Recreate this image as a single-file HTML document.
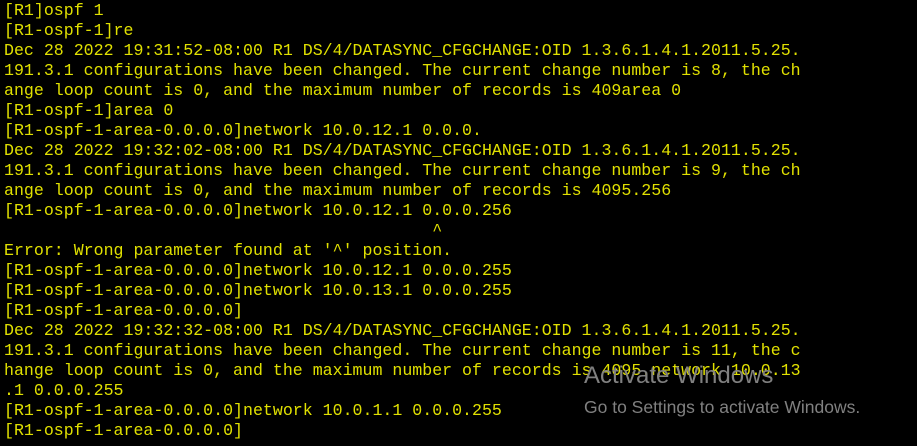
<!DOCTYPE html>
<html><head><meta charset="utf-8"><style>
html,body{margin:0;padding:0;background:#000;width:917px;height:446px;overflow:hidden}
pre{margin:0;position:absolute;left:4px;top:1px;font-family:"Liberation Mono",monospace;font-size:16.6px;line-height:20px;color:#e0e000;white-space:pre}
.w{position:absolute;font-family:"Liberation Sans",sans-serif;color:#808080}
</style></head><body>
<pre>[R1]ospf 1
[R1-ospf-1]re
Dec 28 2022 19:31:52-08:00 R1 DS/4/DATASYNC_CFGCHANGE:OID 1.3.6.1.4.1.2011.5.25.
191.3.1 configurations have been changed. The current change number is 8, the ch
ange loop count is 0, and the maximum number of records is 409area 0
[R1-ospf-1]area 0
[R1-ospf-1-area-0.0.0.0]network 10.0.12.1 0.0.0.
Dec 28 2022 19:32:02-08:00 R1 DS/4/DATASYNC_CFGCHANGE:OID 1.3.6.1.4.1.2011.5.25.
191.3.1 configurations have been changed. The current change number is 9, the ch
ange loop count is 0, and the maximum number of records is 4095.256
[R1-ospf-1-area-0.0.0.0]network 10.0.12.1 0.0.0.256
                                           ^
Error: Wrong parameter found at '^' position.
[R1-ospf-1-area-0.0.0.0]network 10.0.12.1 0.0.0.255
[R1-ospf-1-area-0.0.0.0]network 10.0.13.1 0.0.0.255
[R1-ospf-1-area-0.0.0.0]
Dec 28 2022 19:32:32-08:00 R1 DS/4/DATASYNC_CFGCHANGE:OID 1.3.6.1.4.1.2011.5.25.
191.3.1 configurations have been changed. The current change number is 11, the c
hange loop count is 0, and the maximum number of records is 4095.network 10.0.13
.1 0.0.0.255
[R1-ospf-1-area-0.0.0.0]network 10.0.1.1 0.0.0.255
[R1-ospf-1-area-0.0.0.0]</pre>
<div class="w" style="left:584px;top:362px;font-size:24px">Activate Windows</div>
<div class="w" style="left:584px;top:397px;font-size:17.5px">Go to Settings to activate Windows.</div>
</body></html>
